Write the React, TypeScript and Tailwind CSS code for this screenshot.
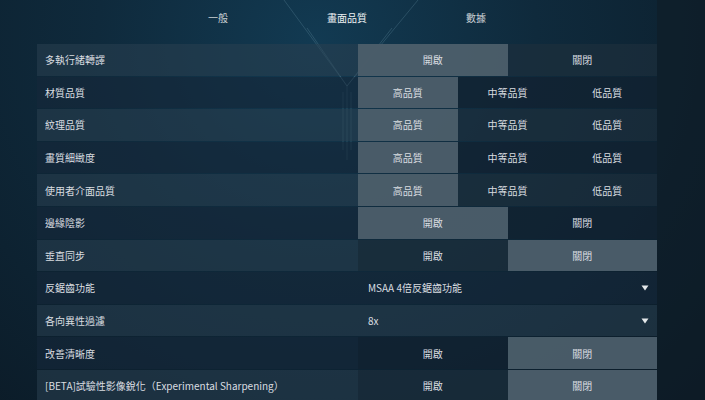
import React from "react";

type Row =
  | { label: string; kind: "toggle"; on: boolean }
  | { label: string; kind: "quality"; value: number }
  | { label: string; kind: "select"; value: string };

const rows: Row[] = [
  { label: "多執行緒轉譯", kind: "toggle", on: true },
  { label: "材質品質", kind: "quality", value: 0 },
  { label: "紋理品質", kind: "quality", value: 0 },
  { label: "畫質細緻度", kind: "quality", value: 0 },
  { label: "使用者介面品質", kind: "quality", value: 0 },
  { label: "邊緣陰影", kind: "toggle", on: true },
  { label: "垂直同步", kind: "toggle", on: false },
  { label: "反鋸齒功能", kind: "select", value: "MSAA 4倍反鋸齒功能" },
  { label: "各向異性過濾", kind: "select", value: "8x" },
  { label: "改善清晰度", kind: "toggle", on: false },
  { label: "[BETA]試驗性影像銳化（Experimental Sharpening）", kind: "toggle", on: false },
];

const tabs = ["一般", "畫面品質", "數據"];
const qualities = ["高品質", "中等品質", "低品質"];

function Cell({ text, active }: { text: string; active: boolean }) {
  return (
    <div
      className={
        active
          ? "flex-1 flex items-center justify-center bg-[#4c5e6a]/95"
          : "flex-1 flex items-center justify-center bg-[#0e1a24]/30"
      }
    >
      {text}
    </div>
  );
}

function Value({ row }: { row: Row }) {
  if (row.kind === "toggle") {
    return (
      <div className="flex h-full">
        <Cell text="開啟" active={row.on} />
        <Cell text="關閉" active={!row.on} />
      </div>
    );
  }
  if (row.kind === "quality") {
    return (
      <div className="flex h-full">
        {qualities.map((q, i) => (
          <Cell key={q} text={q} active={row.value === i} />
        ))}
      </div>
    );
  }
  return (
    <div className="flex h-full items-center justify-between pl-[10px] pr-[8px]">
      <span>{row.value}</span>
      <svg width="8" height="6" viewBox="0 0 8 6">
        <path d="M0.5 0.5h7L4 5.5z" fill="#e4e8ea" />
      </svg>
    </div>
  );
}

export default function App() {
  return (
    <div
      className="relative w-[705px] h-[400px] overflow-hidden bg-[radial-gradient(ellipse_at_45%_10%,#123a52_0%,#0f2a3c_40%,#0b1a26_100%)] text-[#d9dde0] text-[10px]"
      style={{ fontFamily: '"Noto Sans CJK TC", "Noto Sans", sans-serif' }}
    >
      <svg
        className="absolute inset-0 pointer-events-none"
        width="705"
        height="400"
        viewBox="0 0 705 400"
      >
        <g stroke="#6f98ad" strokeOpacity="0.35" strokeWidth="0.8" fill="none">
          <path d="M284 0L347 86L418 0" />
          <path d="M307 28L347 86L392 28" />
          <path d="M347 86V160" />
          <path d="M343 92V150" />
          <path d="M351 92V150" />
        </g>
      </svg>

      <div className="relative flex h-[44px] pb-[10px] items-center">
        {tabs.map((t, i) => (
          <div
            key={t}
            className={
              "absolute -translate-x-1/2 " +
              (i === 1 ? "text-[#eef1f3]" : "text-[#c9d0d4]")
            }
            style={{ left: 218 + i * 129 }}
          >
            {t}
          </div>
        ))}
      </div>

      <div className="relative ml-[37px] w-[620px] flex flex-col gap-px">
        {rows.map((row, i) => (
          <div
            key={row.label}
            className={
              "flex h-[31.6px] shrink-0 " +
              (i % 2 === 0 ? "bg-[#2a4050]/55" : "bg-[#16283a]/60")
            }
          >
            <div className="w-[321px] flex items-center pl-[8px] whitespace-nowrap">
              {row.label}
            </div>
            <div className="flex-1">
              <Value row={row} />
            </div>
          </div>
        ))}
      </div>

      <div className="absolute top-0 right-0 w-[48px] h-full bg-[#0f1c27]/60" />
    </div>
  );
}
